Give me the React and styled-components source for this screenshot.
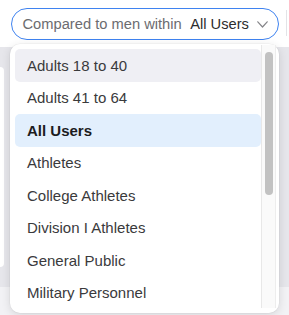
import React from 'react'
import styled, { createGlobalStyle } from 'styled-components'

const options = [
  'Adults 18 to 40',
  'Adults 41 to 64',
  'All Users',
  'Athletes',
  'College Athletes',
  'Division I Athletes',
  'General Public',
  'Military Personnel',
]

function Chevron() {
  return (
    <ChevronIcon width="11" height="7" viewBox="0 0 11 7" fill="none">
      <polyline points="0.8,0.8 5.5,6 10.2,0.8" stroke="#858589" strokeWidth="1.2" strokeLinecap="round" strokeLinejoin="round" />
    </ChevronIcon>
  )
}

export default function App() {
  const selected = 'All Users'
  const hovered = 'Adults 18 to 40'
  return (
    <>
      <Global />
      <Page>
        <Header>
          <Trigger>
            <Label>Compared to men within</Label>
            <Value>{selected}</Value>
            <Chevron />
          </Trigger>
          <EdgeButton />
        </Header>
        <Band>
          <SideCard />
        </Band>
        <Footer />
        <Menu>
          <List>
            {options.map(o => (
              <Option key={o} selected={o === selected} hovered={o === hovered}>
                {o}
              </Option>
            ))}
          </List>
          <ScrollTrack>
            <Thumb />
          </ScrollTrack>
        </Menu>
      </Page>
    </>
  )
}

const Global = createGlobalStyle`
  body{
    margin:0;
    font-family:"Liberation Sans", Arial, sans-serif;
    background:#fff;
  }
`

const Page = styled.div`
  position:relative;
  width:289px;
  height:315px;
  overflow:hidden;
  display:flex;
  flex-direction:column;
`

const Header = styled.div`
  height:47px;
  display:flex;
  align-items:flex-start;
  justify-content:space-between;
  padding-top:8px;
  padding-left:11px;
  box-sizing:border-box;
  background:#fff;
`

const Trigger = styled.div`
  width:268px;
  height:32px;
  box-sizing:border-box;
  border:1.5px solid #3f83f0;
  border-radius:16px;
  display:flex;
  align-items:center;
  padding:0 9px 0 10.5px;
  gap:8.5px;
  font-size:14.7px;
  white-space:nowrap;
`

const Label = styled.span`
  color:#6c6c70;
`

const Value = styled.span`
  color:#2c2c2e;
`

const ChevronIcon = styled.svg`
  flex-shrink:0;
  margin-top:1px;
`

const EdgeButton = styled.div`
  width:2px;
  height:26px;
  margin-top:2px;
  border-left:1px solid #e3e3e7;
`

const Band = styled.div`
  height:240px;
  background:#e6e6eb;
  padding-top:20px;
  box-sizing:border-box;
`

const SideCard = styled.div`
  width:4px;
  height:200px;
  background:#fff;
  border-radius:0 6px 6px 0;
`

const Footer = styled.div`
  flex:1;
  background:#f2f2f5;
`

const Menu = styled.div`
  position:absolute;
  top:44px;
  left:10px;
  width:269px;
  height:269px;
  box-sizing:border-box;
  padding:1px 3px 5px 5px;
  display:flex;
  background:#fff;
  border-radius:10px;
  box-shadow:0 2px 10px rgba(0,0,0,0.12), 0 0 0 0.5px rgba(0,0,0,0.05);
`

const List = styled.div`
  flex:1;
  padding-top:4px;
  overflow:hidden;
`

const ScrollTrack = styled.div`
  width:15px;
  box-sizing:border-box;
  background:#fafafa;
  border-left:1px solid #e8e8e8;
  border-right:1px solid #ededed;
  padding:7px 3px 0 3px;
`

const Thumb = styled.div`
  width:8px;
  height:143px;
  border-radius:4px;
  background:#c2c2c2;
`

const Option = styled.div`
  height:32.5px;
  display:flex;
  align-items:center;
  padding-left:12px;
  border-radius:5px;
  font-size:15px;
  color:${p => (p.selected ? '#1c1c1e' : '#3a3a3c')};
  font-weight:${p => (p.selected ? 700 : 400)};
  background:${p => (p.selected ? '#e2effd' : p.hovered ? '#efeff4' : 'transparent')};
`
